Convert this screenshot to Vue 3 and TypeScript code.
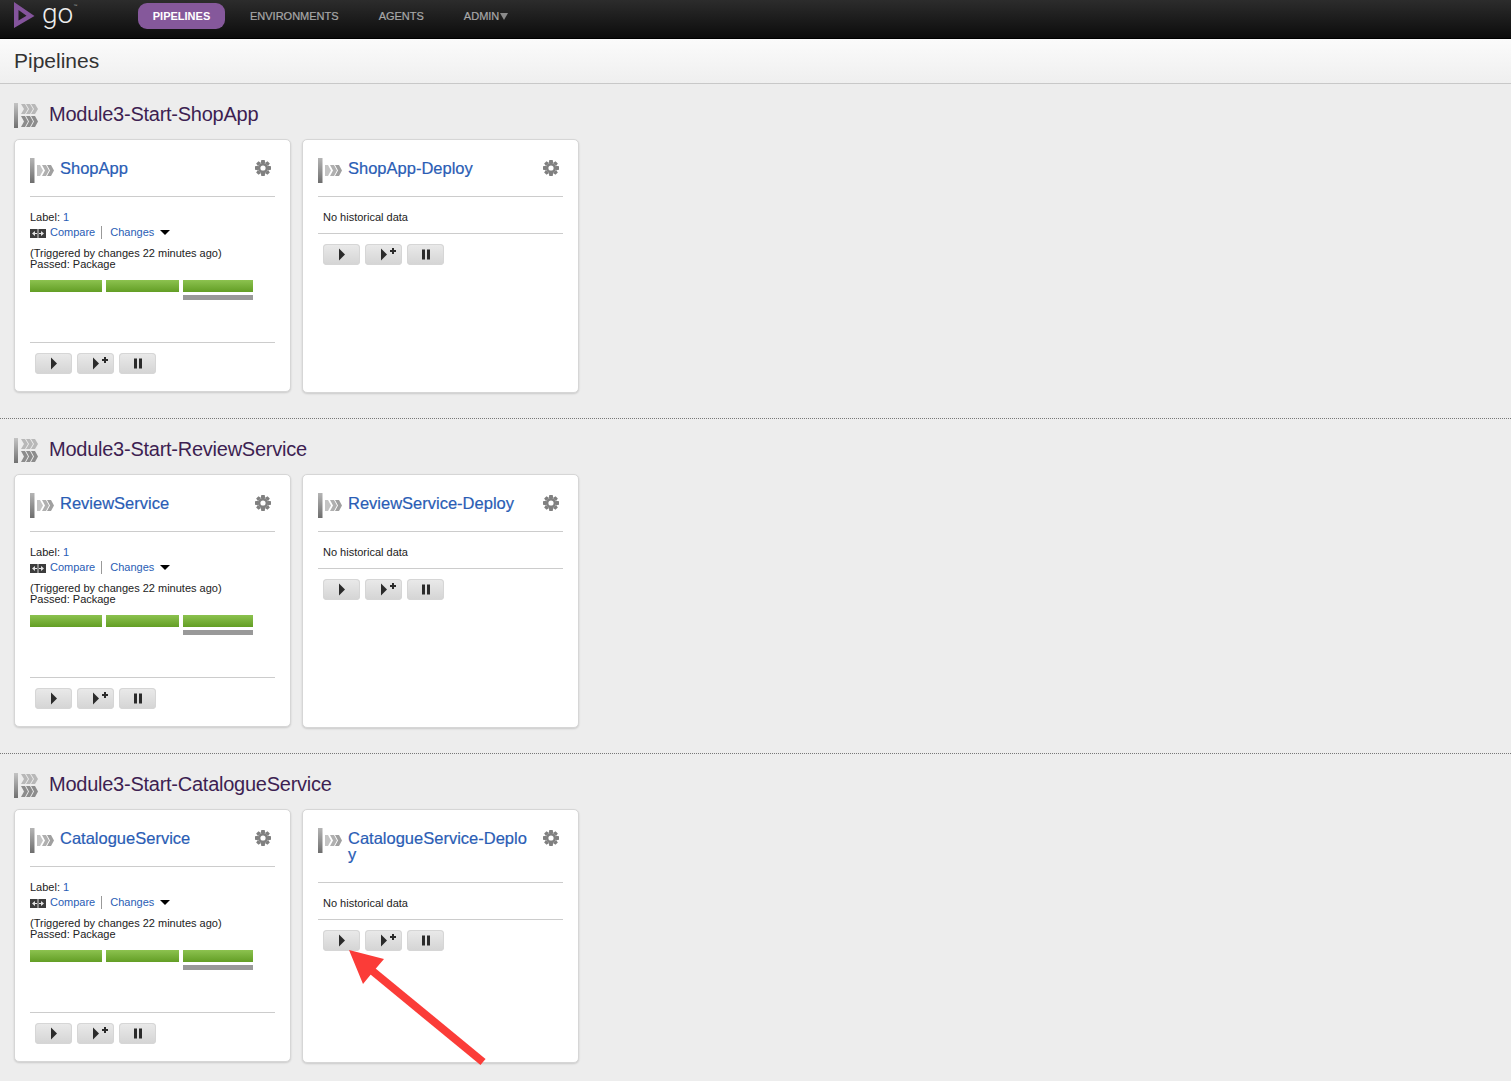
<script setup lang="ts">
interface Pipeline {
  name: string
  history: boolean
}

interface Group {
  name: string
  pipelines: Pipeline[]
}

const groups: Group[] = [
  {
    name: 'Module3-Start-ShopApp',
    pipelines: [
      { name: 'ShopApp', history: true },
      { name: 'ShopApp-Deploy', history: false },
    ],
  },
  {
    name: 'Module3-Start-ReviewService',
    pipelines: [
      { name: 'ReviewService', history: true },
      { name: 'ReviewService-Deploy', history: false },
    ],
  },
  {
    name: 'Module3-Start-CatalogueService',
    pipelines: [
      { name: 'CatalogueService', history: true },
      { name: 'CatalogueService-Deploy', history: false },
    ],
  },
]

// widths of the three stage bars
const stages = [72, 73, 70]

// chevron: flat tail, pointed head
function chevron(x: number, y: number, h: number): string {
  return `M${x} ${y}h4l3 ${h / 2}-3 ${h / 2}h-4l3-${h / 2}Z`
}

// gear with 8 teeth, centred on 8,8
function gearPath(): string {
  const parts: string[] = []
  for (let i = 0; i < 8; i++) {
    const a = (i * Math.PI) / 4
    const pts = [
      [-1.7, -8],
      [1.7, -8],
      [2.2, -5],
      [-2.2, -5],
    ].map(([x, y]) => {
      const px = 8 + x * Math.cos(a) - y * Math.sin(a)
      const py = 8 + x * Math.sin(a) + y * Math.cos(a)
      return `${px.toFixed(2)} ${py.toFixed(2)}`
    })
    parts.push(`M${pts.join('L')}Z`)
  }
  return parts.join('')
}
const gear = gearPath()
</script>

<template>
  <div class="page">
    <header class="topbar">
      <div class="logo">
        <svg class="logo-mark" width="22" height="29" viewBox="0 0 22 29">
          <path d="M0 2L20.5 16L0 28ZM4.500 10V20.500L12.500 15.700Z" fill="#84549c" fill-rule="evenodd" />
        </svg>
        <span class="logo-text">go</span>
        <span class="logo-tm">™</span>
      </div>
      <nav class="nav">
        <a class="nav-pill">PIPELINES</a>
        <a class="nav-item">ENVIRONMENTS</a>
        <a class="nav-item">AGENTS</a>
        <a class="nav-item">ADMIN<i class="nav-caret"></i></a>
      </nav>
    </header>

    <div class="page-head">Pipelines</div>

    <section v-for="group in groups" :key="group.name" class="group">
      <h2 class="group-title">
        <svg class="group-icon" width="25" height="25" viewBox="0 0 25 25">
          <defs>
            <linearGradient id="barGrad" x1="0" y1="0" x2="0" y2="1">
              <stop offset="0" stop-color="#c4c4c4" />
              <stop offset="1" stop-color="#707070" />
            </linearGradient>
          </defs>
          <rect x="0" y="0" width="4" height="25" fill="url(#barGrad)" />
          <g fill="#b8b8b8">
            <path :d="chevron(7, 1, 10)" />
            <path :d="chevron(12, 1, 10)" />
            <path :d="chevron(17, 1, 10)" />
          </g>
          <g fill="#8c8c8c">
            <path :d="chevron(7, 13, 11)" />
            <path :d="chevron(12, 13, 11)" />
            <path :d="chevron(17, 13, 11)" />
          </g>
        </svg>
        <span class="group-name">{{ group.name }}</span>
      </h2>

      <div class="cards">
        <article
          v-for="p in group.pipelines"
          :key="p.name"
          class="card"
          :class="{ 'card-empty': !p.history }"
        >
          <div class="card-head">
            <svg class="card-icon" width="25" height="25" viewBox="0 0 25 25">
              <defs>
                <linearGradient id="cardBar" x1="0" y1="0" x2="0" y2="1">
                  <stop offset="0" stop-color="#b5b5b5" />
                  <stop offset="1" stop-color="#6e6e6e" />
                </linearGradient>
              </defs>
              <rect x="0" y="0" width="4.500" height="25" fill="url(#cardBar)" />
              <path d="M7 7h3l3 5.500-3 5.500H7Z" fill="#c4c4c4" />
              <path :d="chevron(12, 7, 11)" fill="#b0b0b0" />
              <path :d="chevron(17, 7, 11)" fill="#a0a0a0" />
            </svg>
            <a class="card-name">{{ p.name }}</a>
            <svg class="gear" width="16" height="16" viewBox="0 0 16 16">
              <path :d="gear" fill="#808080" />
              <circle cx="8" cy="8" r="3.900" fill="none" stroke="#808080" stroke-width="2.600" />
            </svg>
          </div>

          <div v-if="p.history" class="card-body">
            <div class="line">Label: <a class="link">1</a></div>
            <div class="line compare-line">
              <svg class="compare-icon" width="16" height="9" viewBox="0 0 16 9">
                <rect width="16" height="9" fill="#3c3c3c" />
                <rect x="7.600" width="0.800" height="9" fill="#fff" />
                <path d="M2 4.500L5 2V7ZM14 4.500L11 2V7Z" fill="#e4e4e4" />
                <rect x="5" y="4" width="2" height="1" fill="#e4e4e4" />
                <rect x="9" y="4" width="2" height="1" fill="#e4e4e4" />
              </svg>
              <a class="link compare">Compare</a>
              <a class="link changes">Changes</a>
              <i class="changes-caret"></i>
            </div>
            <div class="trigger">
              (Triggered by changes 22 minutes ago)<br />Passed: Package
            </div>
            <div class="stages">
              <div v-for="(w, i) in stages" :key="i" class="stage" :style="{ width: w + 'px' }">
                <div class="stage-bar"></div>
                <div v-if="i === 2" class="stage-latest"></div>
              </div>
            </div>
          </div>
          <div v-else class="no-history">No historical data</div>

          <div class="actions">
            <button class="btn" type="button" aria-label="Trigger">
              <svg width="37" height="21" viewBox="0 0 37 21"><path d="M16 4.500L22 10.500L16 16.500Z" fill="#2b2b2b" /></svg>
            </button>
            <button class="btn" type="button" aria-label="Trigger with options">
              <svg width="37" height="21" viewBox="0 0 37 21">
                <path d="M16 4.500L22 10.500L16 16.500Z" fill="#2b2b2b" />
                <path d="M27 4h2V6h2V8h-2V10h-2V8h-2V6h2Z" fill="#2b2b2b" />
              </svg>
            </button>
            <button class="btn" type="button" aria-label="Pause">
              <svg width="37" height="21" viewBox="0 0 37 21">
                <rect x="15" y="5.500" width="3" height="10" fill="#2b2b2b" />
                <rect x="20" y="5.500" width="3" height="10" fill="#2b2b2b" />
              </svg>
            </button>
          </div>
        </article>
      </div>
    </section>

    <!-- callout drawn over the screenshot -->
    <svg class="callout" width="160" height="130" viewBox="0 0 160 130">
      <path d="M1 1L36 10L24 24L15 35Z" fill="#fb3c38" />
      <path d="M22 20L135 113" stroke="#fb3c38" stroke-width="8" fill="none" />
    </svg>
  </div>
</template>

<style>
html,
body {
  margin: 0;
  background: #ededed;
}
</style>

<style scoped>
.page {
  position: relative;
  height: 1081px;
  overflow: hidden;
  background: #ededed;
  font-family: "Liberation Sans", Arial, sans-serif;
  color: #222;
}
.topbar {
  display: flex;
  align-items: flex-start;
  height: 38px;
  background: linear-gradient(#2c2c2c, #0c0c0c);
  border-bottom: 1px solid #000;
}
.logo {
  display: flex;
  align-items: flex-start;
  width: 138px;
  flex: none;
  color: #eee;
}
.logo-mark {
  margin: 0 0 0 14px;
}
.logo-text {
  margin: 2px 0 0 6px;
  font-family: Roboto, "Liberation Sans", sans-serif;
  font-weight: 300;
  font-size: 28px;
  line-height: 24px;
}
.logo-tm {
  margin-top: 3px;
  font-size: 4px;
  line-height: 6px;
  color: #aaa;
}
.nav {
  display: flex;
  align-items: center;
  height: 26px;
  margin-top: 3px;
  font-size: 11px;
}
.nav-pill {
  width: 87px;
  height: 26px;
  line-height: 26px;
  text-align: center;
  font-weight: bold;
  color: #fff;
  background: #85589b;
  border-radius: 9px;
  margin-right: 25px;
}
.nav-item {
  margin-right: 40px;
  color: #a8a8a8;
  -webkit-text-stroke: 0.2px #a8a8a8;
}
.nav-caret {
  display: inline-block;
  margin-left: 1px;
  border-left: 4px solid transparent;
  border-right: 4px solid transparent;
  border-top: 7px solid #8a8a8a;
}
.page-head {
  height: 44px;
  line-height: 43px;
  padding-left: 14px;
  font-size: 21px;
  color: #333;
  background: linear-gradient(#fbfbfb, #efefef);
  border-bottom: 1px solid #c8c8c8;
}
.group {
  box-sizing: border-box;
  height: 335px;
  padding: 18px 14px 0;
  border-bottom: 1px dotted #777;
}
.group-title {
  display: flex;
  align-items: center;
  gap: 10px;
  height: 26px;
  margin: 0 0 11px;
  font-size: 20px;
  letter-spacing: -0.25px;
  font-weight: normal;
  color: #3d1f52;
}
.group-icon {
  flex: none;
}
.group-name {
  margin-top: -2px;
}
.cards {
  display: flex;
  align-items: flex-start;
  gap: 11px;
}
.card {
  box-sizing: border-box;
  width: 277px;
  height: 253px;
  padding: 0 15px;
  background: #fff;
  border: 1px solid #d6d6d6;
  border-radius: 5px;
  box-shadow: 0 1px 2px rgba(0, 0, 0, 0.15);
}
.card-empty {
  height: 254px;
}
.card-head {
  display: flex;
  align-items: flex-start;
  padding-top: 18px;
  border-bottom: 1px solid #ccc;
}
.card-icon {
  flex: none;
  margin-right: 5px;
}
.card-name {
  flex: 1;
  min-width: 0;
  padding: 2px 0 20px;
  font-size: 16.500px;
  line-height: 16px;
  color: #2a5db5;
  -webkit-text-stroke: 0.2px #2a5db5;
  word-break: break-all;
}
.gear {
  flex: none;
  margin: 2px 4px 0 11px;
}
.card-body {
  height: 146px;
  padding-top: 13px;
  box-sizing: border-box;
  font-size: 11px;
  line-height: 15px;
  border-bottom: 1px solid #ccc;
}
.line {
  height: 15px;
}
.link {
  color: #2a5db5;
}
.compare-line {
  display: flex;
  align-items: center;
}
.compare-icon {
  flex: none;
  margin: 2px 4px 0 0;
}
.compare {
  padding-right: 6px;
  border-right: 1px solid #999;
  line-height: 13px;
}
.changes {
  margin-left: 8px;
}
.changes-caret {
  margin-left: 6px;
  border-left: 5px solid transparent;
  border-right: 5px solid transparent;
  border-top: 5px solid #000;
}
.trigger {
  margin-top: 8px;
  line-height: 11px;
}
.stages {
  display: flex;
  gap: 4px;
  margin-top: 10px;
}
.stage-bar {
  height: 12px;
  background: linear-gradient(#8cc24f, #639e25);
}
.stage-latest {
  height: 5px;
  margin-top: 3px;
  background: #999;
}
.no-history {
  height: 37px;
  box-sizing: border-box;
  padding: 13px 0 0 5px;
  font-size: 11px;
  line-height: 15px;
  border-bottom: 1px solid #ccc;
}
.actions {
  display: flex;
  gap: 5px;
  padding: 10px 0 0 5px;
}
.btn {
  width: 37px;
  height: 21px;
  padding: 0;
  border: 0;
  border-radius: 4px;
  background: linear-gradient(#eaeaea, #d4d4d4);
  box-shadow: inset 0 0 0 1px #d6d6d6;
}
.btn svg {
  display: block;
}
.callout {
  position: absolute;
  left: 348px;
  top: 949px;
}
</style>
